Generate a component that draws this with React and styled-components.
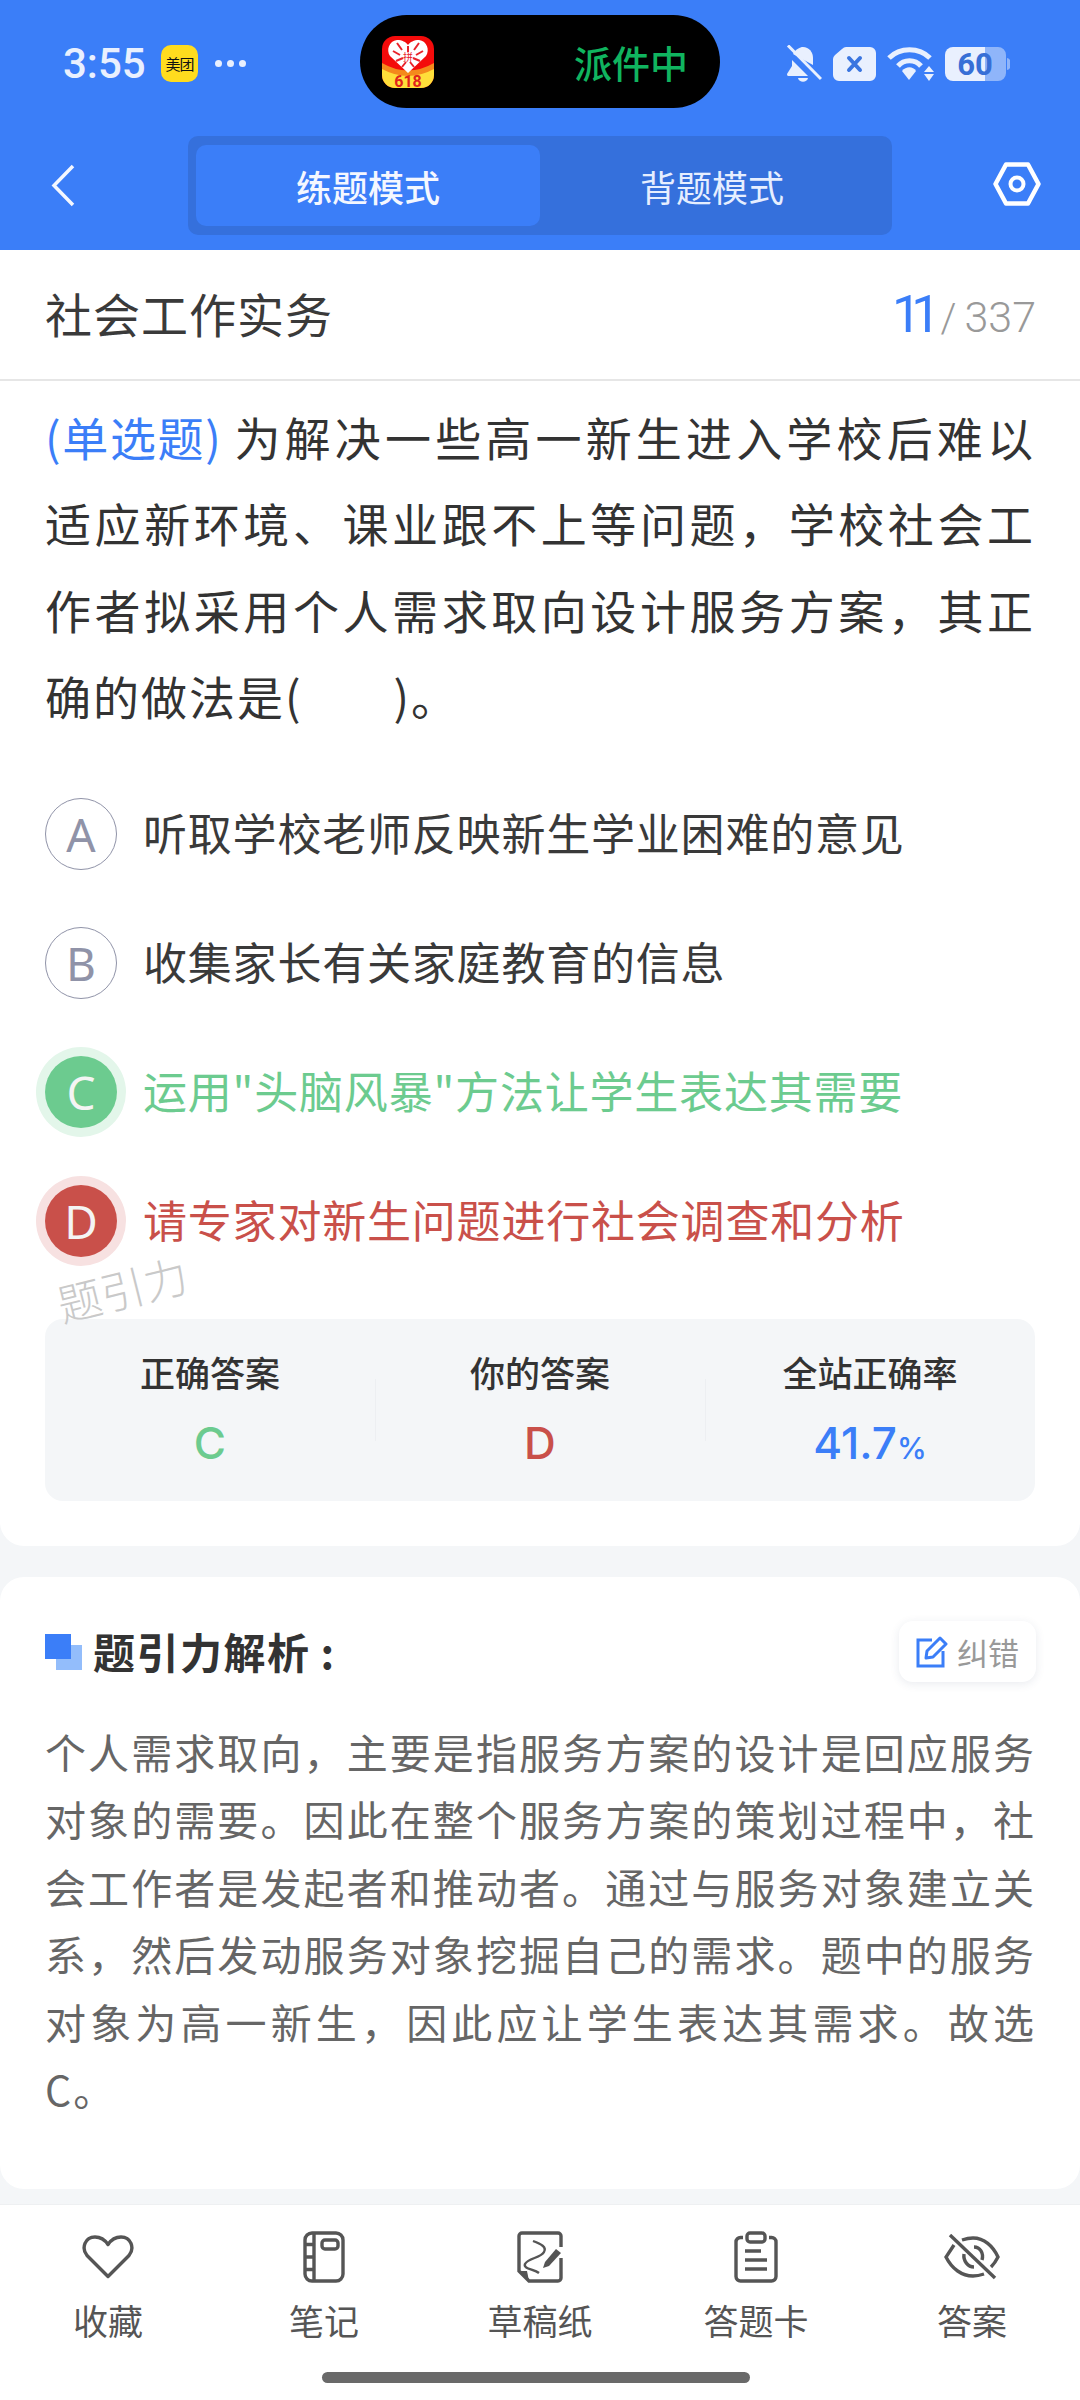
import React from "react";
import styled, { createGlobalStyle } from "styled-components";

const BLUE = "#3b7ef8";
const GREEN = "#6ccb8f";
const RED = "#c9504a";
const ICE = "#e9f0fe";

const GlobalStyle = createGlobalStyle`
  html, body { margin: 0; padding: 0; background: #f4f6f8; }
  * { box-sizing: border-box; }
  body { font-family: "Noto Sans CJK SC", "Noto Sans", sans-serif; }
`;

const Page = styled.div`
  width: 1080px;
  height: 2400px;
  overflow: hidden;
  display: flex;
  flex-direction: column;
  background: #f4f6f8;
`;

const Header = styled.header`
  height: 250px;
  flex: none;
  background: ${BLUE};
  padding-top: 15px;
`;

const StatusBar = styled.div`
  display: grid;
  grid-template-columns: 1fr 360px 1fr;
  height: 93px;
`;

const StatusLeft = styled.div`
  display: flex;
  align-items: center;
  padding: 4px 0 0 63px;
`;

const Clock = styled.span`
  font: 500 42px/1 Roboto, sans-serif;
  color: ${ICE};
  width: 98px;
`;

const AppBadge = styled.div`
  width: 37px;
  height: 37px;
  border-radius: 10px;
  background: #ffdc1e;
  color: #111;
  font-size: 15px;
  line-height: 37px;
  text-align: center;
  white-space: nowrap;
  letter-spacing: -1px;
`;

const Dots = styled.div`
  display: flex;
  gap: 5px;
  margin-left: 17px;
`;

const Dot = styled.i`
  width: 7px;
  height: 7px;
  border-radius: 50%;
  background: ${ICE};
`;

const Island = styled.div`
  background: #000;
  border-radius: 47px;
  display: flex;
  align-items: center;
  padding-left: 22px;
`;

const IslandText = styled.span`
  margin-left: 140px;
  font-size: 38px;
  font-weight: 500;
  line-height: 1;
  color: #10b45f;
  white-space: nowrap;
`;

const StatusRight = styled.div`
  display: flex;
  align-items: center;
  padding: 4px 0 0 66px;
  gap: 11px;
`;

const NavRow = styled.div`
  display: grid;
  grid-template-columns: 1fr 704px 1fr;
  align-items: center;
  margin-top: 28px;
  height: 99px;
`;

const BackSlot = styled.div`
  padding-left: 51px;
  display: flex;
`;

const GearSlot = styled.div`
  display: flex;
  justify-content: flex-end;
  padding: 0 39px 3px 0;
`;

const Segmented = styled.div`
  height: 99px;
  background: #3570dc;
  border-radius: 10px;
  padding: 9px 8px;
  display: grid;
  grid-template-columns: 344px 344px;
`;

const SegTab = styled.div`
  border-radius: 10px;
  background: ${(p) => (p.$active ? BLUE : "transparent")};
  color: ${(p) => (p.$active ? "#f4f7ff" : "#e6eeff")};
  font-size: 36px;
  font-weight: ${(p) => (p.$active ? 500 : 400)};
  display: flex;
  align-items: center;
  justify-content: center;
`;

const Main = styled.main`
  flex: 1;
  display: flex;
  flex-direction: column;
  gap: 31px;
`;

const QuestionCard = styled.section`
  position: relative;
  height: 1296px;
  background: #fff;
  border-radius: 0 0 24px 24px;
`;

const TitleRow = styled.div`
  height: 131px;
  padding: 0 44px 4px 45px;
  display: flex;
  align-items: center;
  justify-content: space-between;
  border-bottom: 2px solid #e6e6e6;
`;

const Subject = styled.h1`
  margin: 0;
  font-size: 47px;
  font-weight: 400;
  letter-spacing: 1px;
  color: #3a3a3a;
`;

const Counter = styled.div`
  display: flex;
  align-items: baseline;
  padding-top: 4px;
  font-family: Roboto, sans-serif;
  font-weight: 300;
  color: #999;
  font-size: 43px;
`;

const CounterNow = styled.span`
  color: ${BLUE};
  font-size: 52px;
  font-weight: 400;
  letter-spacing: -10px;
  margin-right: 10px;
`;

const CounterSep = styled.span`
  margin-right: 8px;
  font-size: 40px;
`;

const Question = styled.p`
  margin: 0;
  padding: 12px 45px 0;
  font-size: 46px;
  line-height: 86.4px;
  letter-spacing: 2px;
  text-align: justify;
  color: #333;
`;

const QType = styled.span`
  color: ${BLUE};
  letter-spacing: -0.5px;
  margin-right: 12px;
`;

const Options = styled.div`
  margin-top: 59px;
  padding: 0 45px;
  display: flex;
  flex-direction: column;
  gap: 57px;
`;

const Option = styled.div`
  display: flex;
  align-items: center;
  gap: 26px;
  height: 72px;
`;

const stateColor = (s) => (s === "right" ? GREEN : s === "wrong" ? RED : null);
const haloColor = (s) => (s === "right" ? "#e3f6ea" : "#f7e1e1");

const Bullet = styled.div`
  width: 72px;
  height: 72px;
  flex: none;
  border-radius: 50%;
  display: flex;
  align-items: center;
  justify-content: center;
  font: 400 46px/1 "Noto Sans", sans-serif;
  color: ${(p) => (p.$state ? "#f4f4f4" : "#9093a8")};
  background: ${(p) => stateColor(p.$state) || "#fff"};
  border: ${(p) => (p.$state ? "none" : "1.5px solid #9093a8")};
  box-shadow: ${(p) => (p.$state ? `0 0 0 9px ${haloColor(p.$state)}` : "none")};
`;

const OptionText = styled.span`
  font-size: 44px;
  letter-spacing: 0.8px;
  line-height: 1;
  padding-bottom: 3px;
  white-space: nowrap;
  color: ${(p) => stateColor(p.$state) || "#3a3a3a"};
`;

const Watermark = styled.div`
  position: absolute;
  z-index: 1;
  left: 56px;
  top: 1006px;
  font-size: 44px;
  font-weight: 300;
  color: #c9c9c9;
  transform: rotate(-14deg);
  white-space: nowrap;
`;

const Stats = styled.div`
  position: relative;
  margin: 0 45px;
  height: 182px;
  margin-top: 62px;
  background: #f4f6f8;
  border-radius: 18px;
  display: grid;
  grid-template-columns: repeat(3, 1fr);
`;

const Stat = styled.div`
  display: flex;
  flex-direction: column;
  align-items: center;
  padding-top: 29px;
  position: relative;
  & + &::before {
    content: "";
    position: absolute;
    left: 0;
    top: 60px;
    height: 62px;
    width: 1px;
    background: #edeff2;
  }
`;

const StatLabel = styled.div`
  font-size: 35px;
  line-height: 48px;
  font-weight: 500;
  color: #333;
`;

const StatValue = styled.div`
  margin-top: 21px;
  font: 500 44px/52px Inter, Roboto, sans-serif;
  color: ${(p) => p.$color};
`;

const Percent = styled.span`
  font-size: 30px;
`;

const AnalysisCard = styled.section`
  height: 612px;
  background: #fff;
  border-radius: 24px;
  padding: 44px 44px 0 45px;
`;

const AnalysisHead = styled.div`
  display: flex;
  align-items: center;
  height: 61px;
`;

const Squares = styled.div`
  position: relative;
  width: 37px;
  height: 36px;
  margin-right: 11px;
  flex: none;
`;

const SquareBack = styled.i`
  position: absolute;
  right: 0;
  bottom: 0;
  width: 26px;
  height: 25px;
  background: #93bdfb;
`;

const SquareFront = styled.i`
  position: absolute;
  left: 0;
  top: 0;
  width: 26px;
  height: 25px;
  background: ${BLUE};
`;

const AnalysisTitle = styled.h2`
  margin: -3px 0 0;
  flex: 1;
  font-size: 42px;
  font-weight: 700;
  letter-spacing: 1.5px;
  color: #333;
`;

const Correct = styled.button`
  width: 137px;
  height: 61px;
  border: none;
  border-radius: 14px;
  background: #fff;
  box-shadow: 0 2px 10px rgba(40, 60, 100, 0.1);
  display: flex;
  align-items: center;
  justify-content: center;
  gap: 9px;
  padding: 0;
  font-family: inherit;
  font-size: 31px;
  color: #999;
`;

const Explanation = styled.p`
  margin: 36px 0 0;
  font-size: 41px;
  line-height: 67.4px;
  letter-spacing: 2px;
  text-align: justify;
  color: #666;
`;

const BottomBar = styled.nav`
  height: 196px;
  flex: none;
  background: #fff;
  border-top: 1px solid #eef0f2;
  position: relative;
  display: grid;
  grid-template-columns: repeat(5, 216px);
`;

const BarItem = styled.div`
  display: flex;
  flex-direction: column;
  align-items: center;
  padding-top: 24px;
`;

const BarIcon = styled.div`
  height: 56px;
  display: flex;
  align-items: center;
  justify-content: center;
`;

const BarLabel = styled.span`
  margin-top: 11px;
  font-size: 35px;
  line-height: 48px;
  color: #555;
`;

const HomeBar = styled.div`
  position: absolute;
  left: 322px;
  bottom: 17px;
  width: 428px;
  height: 11px;
  border-radius: 6px;
  background: #696969;
`;

const PddIcon = () => (
  <svg width="52" height="52" viewBox="0 0 52 52">
    <rect width="52" height="52" rx="13" fill="#f40b0b" />
    <path d="M0 32 Q26 46 52 32 V39 A13 13 0 0 1 39 52 H13 A13 13 0 0 1 0 39 Z" fill="#ffdf3a" />
    <path d="M0 27 Q26 42 52 27 V33 Q26 47 0 33 Z" fill="#f48a1c" />
    <path d="M26 37 L8 20 C4 14 7 5 15 4 C20 4 24 6 26 9 C28 6 32 4 37 4 C45 5 48 14 44 20 Z" fill="#fff" />
    <path
      d="M15 7 L20 14 M37 7 L32 14 M11 15 L18 19 M41 15 L34 19 M14 25 L21 22 M38 25 L31 22 M20 31 L24 26 M32 31 L28 26 M26 10 V16"
      stroke="#e8232a"
      strokeWidth="2"
      fill="none"
    />
    <text x="26" y="25" textAnchor="middle" fontSize="10" fill="#e8232a">拼</text>
    <text x="26" y="51" textAnchor="middle" fontSize="16" fontWeight="700" fontFamily="Roboto" fill="#e0231c">618</text>
  </svg>
);

const BellOff = () => (
  <svg width="36" height="38" viewBox="0 0 36 38">
    <path d="M7 9 C10 4 14 2 17 2 C23 2 27 7 27 13 V20 Z" fill={ICE} />
    <path d="M6 15 V21 L1 29 C1 31 2 31 3 31 H22 Z" fill={ICE} />
    <path d="M12 33 H22 C21 38 13 38 12 33 Z" fill={ICE} />
    <path d="M2 0.5 L35 34" stroke={ICE} strokeWidth="3" />
  </svg>
);

const SimOff = () => (
  <svg width="43" height="34" viewBox="0 0 43 34">
    <path d="M13 0 H37 A6 6 0 0 1 43 6 V28 A6 6 0 0 1 37 34 H6 A6 6 0 0 1 0 28 V12 Q0 10 2 8 L9 2 Q11 0 13 0 Z" fill={ICE} />
    <path d="M16 11 L27 23 M27 11 L16 23" stroke="#3a75e0" strokeWidth="4" strokeLinecap="round" />
  </svg>
);

const Wifi = () => (
  <svg width="47" height="34" viewBox="0 0 47 34">
    <path d="M2 11 C13 0 32 0 43 11" stroke={ICE} strokeWidth="5" fill="none" />
    <path d="M11 19 C17 12 28 12 34 19" stroke={ICE} strokeWidth="5" fill="none" />
    <path d="M15 24 C19 19 26 19 29 24 L22 33 Z" fill={ICE} />
    <path d="M42 19 L47 25 H37 Z M37 27 H47 L42 34 Z" fill={ICE} />
  </svg>
);

const Battery = () => (
  <svg width="65" height="34" viewBox="0 0 65 34">
    <path d="M40 0 H53 A8 8 0 0 1 61 8 V26 A8 8 0 0 1 53 34 H40 Z M62 11 A4 6 0 0 1 62 23 Z" fill="#8fb5fa" />
    <path d="M8 0 H40 V34 H8 A8 8 0 0 1 0 26 V8 A8 8 0 0 1 8 0 Z" fill={ICE} />
    <text x="30" y="28" textAnchor="middle" fontSize="31" fontWeight="700" fontFamily="Roboto" fill="#376fd6">60</text>
  </svg>
);

const BackIcon = () => (
  <svg width="24" height="43" viewBox="0 0 24 43">
    <path d="M22 2 L3 21.5 L22 41" stroke="#f4f7ff" strokeWidth="3.5" fill="none" />
  </svg>
);

const GearIcon = () => (
  <svg width="48" height="44" viewBox="0 0 48 44">
    <path d="M13 2.5 H35 L45.5 22 L35 41.5 H13 L2.5 22 Z" stroke="#fff" strokeWidth="4.5" strokeLinejoin="round" fill="none" />
    <circle cx="24" cy="22" r="6.5" stroke="#fff" strokeWidth="4" fill="none" />
  </svg>
);

const EditIcon = () => (
  <svg width="32" height="32" viewBox="0 0 32 32">
    <path d="M16 4 H2 V30 H27 V15" stroke={BLUE} strokeWidth="3" fill="none" />
    <path d="M10 22 L11 15 L24 2 L30 8 L17 21 Z" stroke={BLUE} strokeWidth="3" fill="none" strokeLinejoin="round" />
  </svg>
);

const stroke = { stroke: "#555", strokeWidth: 3.4, fill: "none" };

const HeartIcon = () => (
  <svg width="52" height="44" viewBox="0 0 52 44">
    <path d="M26 41.5 L5 20.5 C-1 13 3 2 13 2 C19 2 23 5 26 9.5 C29 5 33 2 39 2 C49 2 53 13 47 20.5 Z" {...stroke} strokeLinejoin="round" />
  </svg>
);

const NotebookIcon = () => (
  <svg width="42" height="52" viewBox="0 0 42 52">
    <rect x="2" y="2" width="38" height="48" rx="7" {...stroke} />
    <path d="M11 2 V50 M2 13.5 H11 M2 26 H11 M2 38.5 H11" {...stroke} />
    <rect x="19" y="9" width="16" height="9" rx="3" {...stroke} />
  </svg>
);

const ScratchIcon = () => (
  <svg width="46" height="52" viewBox="0 0 46 52">
    <path d="M44 16 V5 A3 3 0 0 0 41 2 H5 A3 3 0 0 0 2 5 V40 L12 50 H41 A3 3 0 0 0 44 47 V27" {...stroke} />
    <path d="M2 40 H10 L12 50 Z" fill="#555" />
    <path d="M16 10 C24 13 30 16 27 21 C24 27 11 27 8 33 C6 38 17 38 22 42" stroke="#555" strokeWidth="2.4" fill="none" />
    <path d="M26 37 L28 31 L39 18 L44 22 L32 35 Z" fill="#555" />
  </svg>
);

const ClipboardIcon = () => (
  <svg width="44" height="52" viewBox="0 0 44 52">
    <path d="M9 6.5 H6.5 A4.5 4.5 0 0 0 2 11 V45.5 A4.5 4.5 0 0 0 6.5 50 H37.5 A4.5 4.5 0 0 0 42 45.5 V11 A4.5 4.5 0 0 0 37.5 6.5 H35" {...stroke} />
    <rect x="13" y="2" width="18" height="9" rx="3" {...stroke} />
    <path d="M11 20 H27 M11 29 H33 M11 38 H33" {...stroke} />
  </svg>
);

const EyeOffIcon = () => (
  <svg width="56" height="46" viewBox="0 0 56 46">
    <path d="M10 11 L2 23 C8 35 18 42 29 42 C33 42 37 41 40 40" {...stroke} />
    <path d="M18 6 C21 5 25 4 29 4 C40 4 49 12 54 23 C52 27 50 30 47 33" {...stroke} />
    <path d="M20 20 C19 27 24 33 30 33 M30 13 C36 13 40 19 38 26" {...stroke} />
    <path d="M6 1 L51 44" {...stroke} />
  </svg>
);

const options = [
  { key: "A", text: "听取学校老师反映新生学业困难的意见" },
  { key: "B", text: "收集家长有关家庭教育的信息" },
  { key: "C", text: "运用\"头脑风暴\"方法让学生表达其需要", state: "right" },
  { key: "D", text: "请专家对新生问题进行社会调查和分析", state: "wrong" },
];

const tools = [
  { label: "收藏", Icon: HeartIcon },
  { label: "笔记", Icon: NotebookIcon },
  { label: "草稿纸", Icon: ScratchIcon },
  { label: "答题卡", Icon: ClipboardIcon },
  { label: "答案", Icon: EyeOffIcon },
];

export default function App() {
  return (
    <Page>
      <GlobalStyle />
      <Header>
        <StatusBar>
          <StatusLeft>
            <Clock>3:55</Clock>
            <AppBadge>美团</AppBadge>
            <Dots>
              <Dot />
              <Dot />
              <Dot />
            </Dots>
          </StatusLeft>
          <Island>
            <PddIcon />
            <IslandText>派件中</IslandText>
          </Island>
          <StatusRight>
            <BellOff />
            <SimOff />
            <Wifi />
            <Battery />
          </StatusRight>
        </StatusBar>
        <NavRow>
          <BackSlot>
            <BackIcon />
          </BackSlot>
          <Segmented>
            <SegTab $active>练题模式</SegTab>
            <SegTab>背题模式</SegTab>
          </Segmented>
          <GearSlot>
            <GearIcon />
          </GearSlot>
        </NavRow>
      </Header>
      <Main>
        <QuestionCard>
          <TitleRow>
            <Subject>社会工作实务</Subject>
            <Counter>
              <CounterNow>11</CounterNow>
              <CounterSep>/</CounterSep>
              337
            </Counter>
          </TitleRow>
          <Question>
            <QType>(单选题)</QType>
            为解决一些高一新生进入学校后难以适应新环境、课业跟不上等问题，学校社会工作者拟采用个人需求取向设计服务方案，其正确的做法是(&nbsp;&nbsp;&nbsp;&nbsp;&nbsp;&nbsp;&nbsp;&#8202;)。
          </Question>
          <Options>
            {options.map((o) => (
              <Option key={o.key}>
                <Bullet $state={o.state}>{o.key}</Bullet>
                <OptionText $state={o.state}>{o.text}</OptionText>
              </Option>
            ))}
          </Options>
          <Watermark>题引力</Watermark>
          <Stats>
            <Stat>
              <StatLabel>正确答案</StatLabel>
              <StatValue $color={GREEN}>C</StatValue>
            </Stat>
            <Stat>
              <StatLabel>你的答案</StatLabel>
              <StatValue $color={RED}>D</StatValue>
            </Stat>
            <Stat>
              <StatLabel>全站正确率</StatLabel>
              <StatValue $color={BLUE}>
                41.7<Percent>%</Percent>
              </StatValue>
            </Stat>
          </Stats>
        </QuestionCard>
        <AnalysisCard>
          <AnalysisHead>
            <Squares>
              <SquareBack />
              <SquareFront />
            </Squares>
            <AnalysisTitle>题引力解析&thinsp;:</AnalysisTitle>
            <Correct>
              <EditIcon />
              纠错
            </Correct>
          </AnalysisHead>
          <Explanation>
            个人需求取向，主要是指服务方案的设计是回应服务对象的需要。因此在整个服务方案的策划过程中，社会工作者是发起者和推动者。通过与服务对象建立关系，然后发动服务对象挖掘自己的需求。题中的服务对象为高一新生，因此应让学生表达其需求。故选C。
          </Explanation>
        </AnalysisCard>
      </Main>
      <BottomBar>
        {tools.map(({ label, Icon }) => (
          <BarItem key={label}>
            <BarIcon>
              <Icon />
            </BarIcon>
            <BarLabel>{label}</BarLabel>
          </BarItem>
        ))}
        <HomeBar />
      </BottomBar>
    </Page>
  );
}
